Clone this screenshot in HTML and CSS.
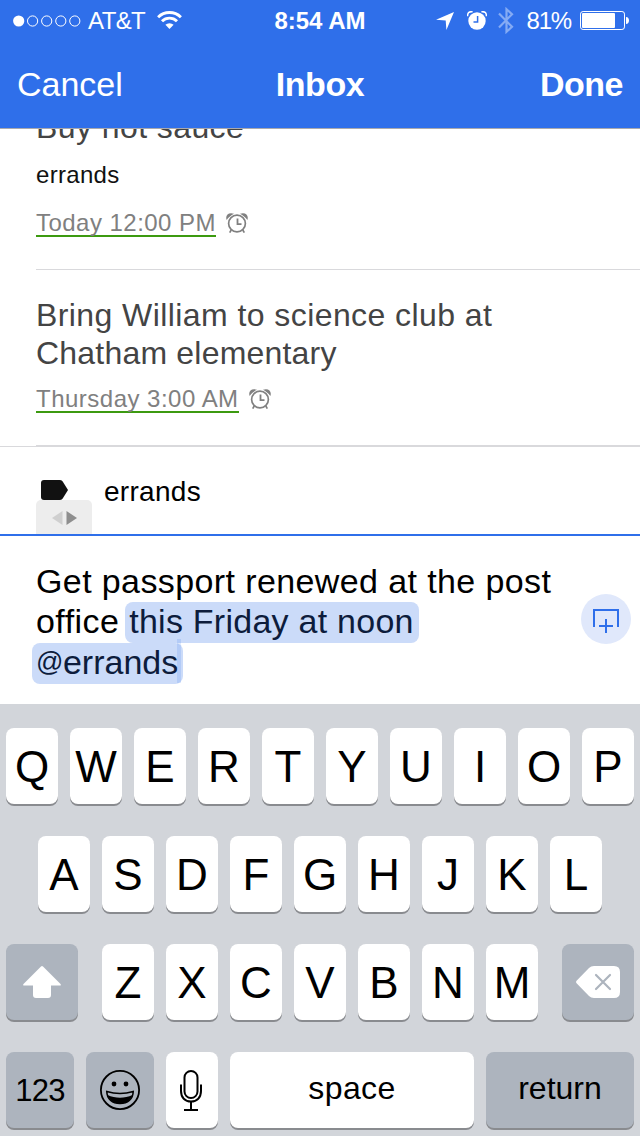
FILE: index.html
```html
<!DOCTYPE html>
<html lang="en">
<head>
  <meta charset="UTF-8">
  <meta name="viewport" content="width=device-width, initial-scale=1.0">
  <title>Inbox</title>
  <link rel="stylesheet" href="styles.css">
</head>
<body>

  <!-- clock icon shared by the list items -->
  <svg class="defs" width="0" height="0">
    <symbol id="alarm" viewBox="0 0 22 21">
      <g fill="none" stroke="#808080">
        <circle cx="11" cy="10.5" r="8.4" stroke-width="1.7"/>
        <path d="M11.500 5.500v5.700h4" stroke-width="1.800"/>
        <path d="M5.200 17l-1.500 2.600M16.800 17l1.500 2.600" stroke-width="1.700"/>
      </g>
      <path d="M.6 6.900C-1 2.500 2.500-1.200 8 .8 5 2.300 2.700 4.300.6 6.900zM21.400 6.900C23 2.500 19.500-1.200 14 .8c3 1.500 5.300 3.500 7.400 6.100z" fill="#808080"/>
    </symbol>
  </svg>

  <header class="header">
    <div class="status">
      <div class="status-left">
        <svg width="68" height="12" viewBox="0 0 68 12">
          <circle cx="5.7" cy="6" r="5.6" fill="#fff"/>
          <g fill="none" stroke="#fff" stroke-width="1">
            <circle cx="19.6" cy="6" r="5.1"/>
            <circle cx="33.7" cy="6" r="5.1"/>
            <circle cx="47.8" cy="6" r="5.1"/>
            <circle cx="61.8" cy="6" r="5.1"/>
          </g>
        </svg>
        <span class="carrier">AT&amp;T</span>
        <svg class="wifi" width="25" height="18" viewBox="0 0 25 18">
          <g fill="none" stroke="#fff" stroke-width="2.9">
            <path d="M1.100 6.200a16.300 16.300 0 0 1 22.800 0"/>
            <path d="M5 10.200a10.700 10.700 0 0 1 15 0"/>
          </g>
          <path d="M12.500 18l-4.100-4.200a5.900 5.900 0 0 1 8.200 0z" fill="#fff"/>
        </svg>
      </div>
      <div class="clock">8:54 AM</div>
      <div class="status-right">
        <svg width="18" height="18" viewBox="0 0 18 18"><path d="M18 0L10.400 18 9.700 8.400 0 7.700z" fill="#fff"/></svg>
        <svg class="status-alarm" width="20" height="19" viewBox="0 0 20 19">
          <circle cx="10" cy="10" r="8.700" fill="#fff"/>
          <path d="M.6 5.200C.4 1.600 2.600.3 5.600.7M19.400 5.200C19.600 1.600 17.400.3 14.400.7" fill="none" stroke="#fff" stroke-width="1.500"/>
          <path d="M10.600 5v6H6.500" fill="none" stroke="#2f6fea" stroke-width="1.500"/>
        </svg>
        <svg class="bluetooth" width="16" height="27" viewBox="0 0 16 27">
          <path d="M1 6.500l13 13.300-5.500 5V2.200l5.500 5L1 20.500" fill="none" stroke="#85abf4" stroke-width="2.200"/>
        </svg>
        <span class="percent">81%</span>
        <svg width="49" height="19" viewBox="0 0 49 19">
          <rect x=".5" y=".5" width="44" height="18" rx="2.600" fill="none" stroke="#fff"/>
          <rect x="2" y="2" width="33" height="15" rx="1" fill="#fff"/>
          <path d="M46 6c4 0 4 7 0 7z" fill="#fff"/>
        </svg>
      </div>
    </div>
    <nav class="nav">
      <a class="cancel">Cancel</a>
      <h1 class="nav-title">Inbox</h1>
      <a class="done">Done</a>
    </nav>
  </header>

  <main class="list">
    <article class="item item-cut">
      <h2 class="item-title">Buy hot sauce</h2>
      <p class="item-tag">errands</p>
      <div class="item-when">
        <span class="when when-today">Today 12:00 PM</span>
        <svg width="22" height="21"><use href="#alarm"/></svg>
      </div>
    </article>
    <article class="item">
      <h2 class="item-title">Bring William to science club at<br><span class="tight">Chatham elementary</span></h2>
      <div class="item-when">
        <span class="when">Thursday 3:00 AM</span>
        <svg width="22" height="21"><use href="#alarm"/></svg>
      </div>
    </article>
  </main>

  <section class="tagbar">
    <div class="tag-handle">
      <svg class="tag-icon" width="27" height="20" viewBox="0 0 27 20">
        <path d="M3 0h15.500q2 0 3 1.300L27 10l-5.500 8.700q-1 1.300-3 1.300H3q-3 0-3-3V3q0-3 3-3z" fill="#111"/>
      </svg>
      <div class="pager">
        <svg width="25" height="14" viewBox="0 0 25 14">
          <path d="M10.500 0v14L0 7z" fill="#cfcfcf"/>
          <path d="M14.500 0v14L25 7z" fill="#8e8e8e"/>
        </svg>
      </div>
    </div>
    <span class="tag-name">errands</span>
  </section>

  <section class="composer">
    <p class="draft">
      <span class="line">Get passport renewed at the post</span>
      <span class="line"><span class="office">office </span><mark>this Friday at noon</mark></span>
      <span class="line line-tag"><mark class="mark-tag"><span class="at">@</span>errands<i class="caret"></i></mark></span>
    </p>
    <button class="add">
      <svg width="26" height="24" viewBox="0 0 26 24">
        <path d="M1 18V1h24v17M13 10v14M6 17h14" fill="none" stroke="#2f6fea" stroke-width="2"/>
      </svg>
    </button>
  </section>

  <section class="keyboard">
    <div class="row">
      <button class="key">Q</button>
      <button class="key">W</button>
      <button class="key">E</button>
      <button class="key">R</button>
      <button class="key">T</button>
      <button class="key">Y</button>
      <button class="key">U</button>
      <button class="key">I</button>
      <button class="key">O</button>
      <button class="key">P</button>
    </div>
    <div class="row">
      <button class="key">A</button>
      <button class="key">S</button>
      <button class="key">D</button>
      <button class="key">F</button>
      <button class="key">G</button>
      <button class="key">H</button>
      <button class="key">J</button>
      <button class="key">K</button>
      <button class="key">L</button>
    </div>
    <div class="row row-spread">
      <button class="key dark wide">
        <svg width="38" height="32" viewBox="0 0 38 32">
          <path d="M18 .5q1-.9 2 0L37.500 18q1 1.500-.8 1.500H28V29q0 3-3 3H13q-3 0-3-3v-9.500H1.300Q-.5 19.500.5 18z" fill="#fff"/>
        </svg>
      </button>
      <div class="letters">
        <button class="key">Z</button>
        <button class="key">X</button>
        <button class="key">C</button>
        <button class="key">V</button>
        <button class="key">B</button>
        <button class="key">N</button>
        <button class="key">M</button>
      </div>
      <button class="key dark wide">
        <svg width="44" height="32" viewBox="0 0 44 32">
          <path d="M18 0h20q6 0 6 6v20q0 6-6 6H18q-3 0-5-2L.8 17.500q-1.500-1.500 0-3L13 2q2-2 5-2z" fill="#fff"/>
          <path d="M20 9l14 14M34 9L20 23" stroke="#adb4be" stroke-width="2.200" stroke-linecap="round"/>
        </svg>
      </button>
    </div>
    <div class="row">
      <button class="key dark fn numbers">123</button>
      <button class="key dark fn">
        <svg width="40" height="40" viewBox="0 0 40 40">
          <circle cx="20" cy="20" r="19.100" fill="none" stroke="#000" stroke-width="1.800"/>
          <circle cx="14" cy="14" r="2.400"/>
          <circle cx="26" cy="14" r="2.400"/>
          <path d="M6.800 21.600c8.400 2.400 18 2.400 26.400 0C33 29.500 27.500 33.500 20 33.500S7 29.500 6.800 21.600z" fill="none" stroke="#000" stroke-width="1.600"/>
          <path d="M7.500 25c8 3.600 17 3.600 25 0-1.500 6-6.500 8.500-12.500 8.500s-11-2.500-12.500-8.500z"/>
        </svg>
      </button>
      <button class="key mic">
        <svg width="22" height="41" viewBox="0 0 22 41">
          <g fill="none" stroke="#000" stroke-width="2">
            <rect x="4.500" y="1" width="13" height="27" rx="6.500"/>
            <path d="M1 14.500V21c0 6.500 4 10.500 10 10.500S21 27.500 21 21v-6.500M11 31.500v8.500M4 40h14"/>
          </g>
        </svg>
      </button>
      <button class="key space">space</button>
      <button class="key dark return">return</button>
    </div>
  </section>

</body>
</html>
```
FILE: styles.css
```css
* {
  box-sizing: border-box;
}

body {
  width: 640px;
  height: 1136px;
  margin: 0;
  overflow: hidden;
  display: flex;
  flex-direction: column;
  background: #fff;
  font-family: "Liberation Sans", Arial, sans-serif;
}

h1, h2, p {
  margin: 0;
  font-weight: normal;
}

svg {
  display: block;
  flex: none;
}

button {
  padding: 0;
  border: none;
  font-family: inherit;
  color: #000;
}

.defs {
  position: absolute;
}

/* status bar + nav */
.header {
  flex: none;
  height: 129px;
  background: #2f6fea;
  border-bottom: 1px solid #a9a9ad;
  color: #fff;
}

.status {
  display: grid;
  grid-template-columns: 1fr auto 1fr;
  height: 41px;
  padding: 0 11px 0 13px;
  font-size: 24px;
  line-height: 41px;
}

.status-left, .status-right {
  display: flex;
  align-items: center;
}

.status-right {
  justify-content: flex-end;
}

.carrier {
  margin-left: 7px;
  letter-spacing: -0.6px;
}

.wifi {
  margin: -1px 0 0 12px;
}

.clock {
  margin: 0 1px 0 -1px;
  font-weight: bold;
}

.status-alarm {
  margin-left: 13px;
}

.bluetooth {
  margin-left: 11px;
}

.percent {
  margin: 0 9px 0 13px;
  letter-spacing: -1.2px;
}

.nav {
  display: grid;
  grid-template-columns: 1fr auto 1fr;
  padding: 0 17px;
  font-size: 34px;
  line-height: 87px;
}

.nav-title {
  font-size: 34px;
  font-weight: bold;
  letter-spacing: -0.4px;
}

.done {
  font-weight: bold;
  letter-spacing: -0.5px;
  text-align: right;
}

/* list */
.list {
  flex: none;
  height: 317px;
  overflow: hidden;
}

.item {
  margin-left: 36px;
  padding: 26px 0 32px;
  border-bottom: 1px solid #d9d9dc;
}

.item-cut {
  margin-top: -21px;
  padding-top: 0;
}

.item-title {
  font-size: 32px;
  line-height: 38px;
  letter-spacing: 0.42px;
  color: #444;
}

.tight {
  letter-spacing: 0.2px;
}

.item-tag {
  margin: 15px 0 21px;
  font-size: 24px;
  line-height: 28px;
  letter-spacing: 0.3px;
  color: #111;
}

.item-when {
  display: flex;
  align-items: center;
  gap: 10px;
}

.item-title + .item-when {
  margin-top: 14px;
}

.when {
  border-bottom: 2px solid #3c9a10;
  font-size: 24px;
  line-height: 25px;
  letter-spacing: 0.49px;
  color: #808080;
}

.when-today {
  letter-spacing: 0.47px;
}

/* tag picker above the composer */
.tagbar {
  flex: none;
  display: flex;
  height: 90px;
  padding-left: 36px;
  border-top: 1px solid #d9d9dc;
  border-bottom: 2px solid #2f6fea;
}

.tag-handle {
  width: 56px;
  margin-right: 12px;
  padding-top: 33px;
}

.tag-icon {
  margin-left: 5px;
}

.pager {
  display: flex;
  justify-content: center;
  align-items: center;
  height: 34px;
  padding-top: 2px;
  border-radius: 5px 5px 0 0;
  background: #ededed;
}

.tag-name {
  font-size: 28px;
  line-height: 89px;
  letter-spacing: 0.3px;
}

/* composer */
.composer {
  flex: none;
  display: flex;
  justify-content: space-between;
  height: 168px;
  padding: 25px 9px 0 36px;
}

.draft {
  font-size: 34px;
  line-height: 40px;
  letter-spacing: 0.39px;
  white-space: nowrap;
}

.line {
  display: block;
}

.line-tag {
  margin-top: 1px;
}

.office {
  letter-spacing: 0.45px;
}

mark {
  margin: 0 -4px;
  padding: 0 5px 3px 4px;
  border-radius: 8px;
  background: #cbdbf9;
  color: #0d1c3c;
  letter-spacing: 0.25px;
}

.mark-tag {
  position: relative;
  letter-spacing: 0;
}

.at {
  font-size: 27px;
  line-height: 0;
  vertical-align: 3px;
  letter-spacing: -0.5px;
}

.caret {
  position: absolute;
  right: 2px;
  top: -4px;
  width: 4px;
  height: 44px;
  background: rgba(47, 111, 234, 0.15);
}

.add {
  display: flex;
  justify-content: center;
  align-items: center;
  width: 50px;
  height: 50px;
  margin-top: 33px;
  padding-top: 4px;
  border-radius: 50%;
  background: #e0e8fb;
}

/* keyboard */
.keyboard {
  flex: 1;
  display: flex;
  flex-direction: column;
  gap: 32px;
  padding: 24px 6px 0;
  background: #d2d5da;
}

.row, .letters {
  display: flex;
  justify-content: center;
  gap: 12px;
}

.row-spread {
  justify-content: space-between;
}

.key {
  display: flex;
  justify-content: center;
  align-items: center;
  width: 52px;
  height: 76px;
  padding-top: 2px;
  border-radius: 8px;
  background: #fff;
  box-shadow: 0 2px 0 #898b8f;
  font-size: 44px;
}

.dark {
  padding-top: 0;
  background: #adb4be;
}

.mic {
  padding: 0 2px 0 0;
}

.wide {
  width: 72px;
}

.fn {
  width: 68px;
}

.numbers {
  padding-top: 2px;
  font-size: 31px;
  letter-spacing: -0.8px;
}

.space, .return {
  width: 244px;
  padding: 0 0 4px;
  font-size: 32px;
}

.space {
  letter-spacing: 0.4px;
}

.return {
  width: 148px;
}
```
